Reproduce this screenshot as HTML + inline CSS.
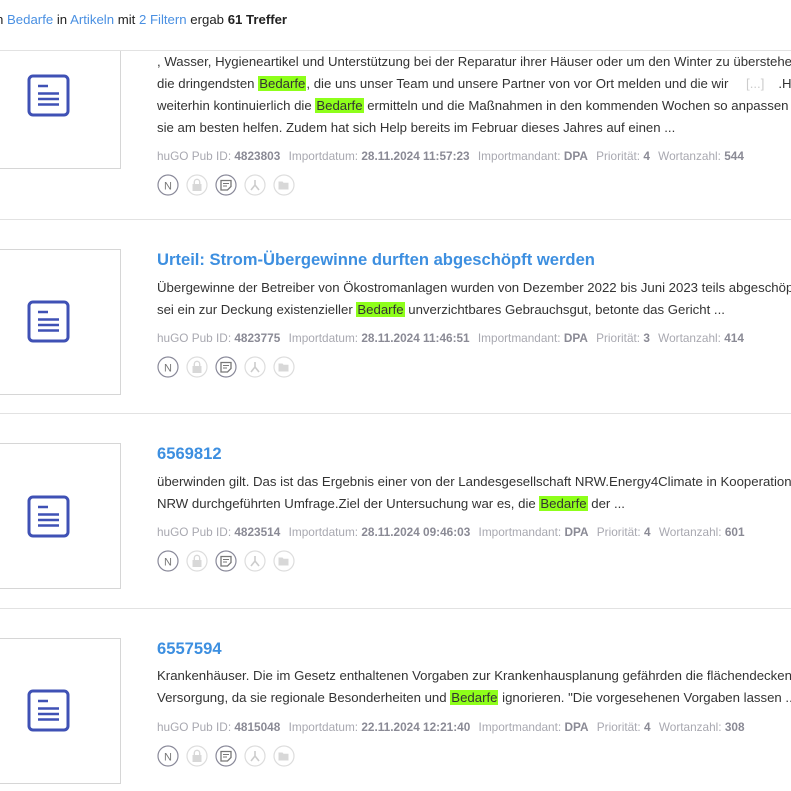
<!DOCTYPE html>
<html><head><meta charset="utf-8"><style>
*{margin:0;padding:0;box-sizing:border-box}
body{width:791px;height:791px;overflow:hidden;background:#fff;font-family:"Liberation Sans",sans-serif;color:#333;position:relative}
.hdr{position:absolute;top:12px;font-size:13.2px;color:#222;white-space:nowrap;left:-4px}
.hdr a{color:#4a90e2}
.sep{position:absolute;left:0;width:791px;height:1px;background:#e2e2e2}
.thumb{position:absolute;left:-10px;width:131px;border:1px solid #d6d6d6;background:#fff}
.doc{position:absolute;left:27px;width:43px;height:43px}
.t{position:absolute;left:157px;font-size:16.6px;font-weight:bold;color:#3d8fe0;white-space:nowrap}
.l{position:absolute;left:157px;font-size:13.2px;white-space:nowrap;color:#333;line-height:16px}
mark{background:#8eff1a;color:#333;padding:0 1px}
.m{position:absolute;left:157px;font-size:11.8px;color:#a8a8b0;white-space:nowrap}
.m b{color:#8a8a95;margin-right:5px}
.ic{position:absolute;left:157px;height:22px}
</style></head><body>
<div class="hdr">n <a>Bedarfe</a> in <a>Artikeln</a> mit <a>2 Filtern</a> ergab <b>61 Treffer</b></div>

<svg width="0" height="0" style="position:absolute">
<defs>
<g id="docic"><rect x="2" y="2" width="39" height="39" rx="4" fill="none" stroke="#3f51b5" stroke-width="3"/><path d="M11 12H21M11 19.5H32M11 25H32M11 30.5H32" stroke="#3f51b5" stroke-width="2.6"/></g>
<g id="icons">
<circle cx="11" cy="11" r="10" fill="none" stroke="#8a8a9a" stroke-width="1.2"/><text x="11" y="15.5" font-size="11" text-anchor="middle" fill="#777" font-family="Liberation Sans">N</text>
<circle cx="40" cy="11" r="10" fill="none" stroke="#ddd" stroke-width="1.2"/><rect x="35.5" y="10" width="9" height="7" fill="#d8d8d8"/><path d="M37.3 10V8a2.7 2.7 0 0 1 5.4 0v2" fill="none" stroke="#d8d8d8" stroke-width="1.4"/>
<circle cx="69" cy="11" r="10" fill="none" stroke="#8a8a9a" stroke-width="1.2"/><path d="M64 6.5h10v6l-3.5 3.5H64z" fill="none" stroke="#777" stroke-width="1.3"/><path d="M66 9.5h6M66 12h4" stroke="#777" stroke-width="1.1"/>
<circle cx="98" cy="11" r="10" fill="none" stroke="#ddd" stroke-width="1.2"/><path d="M98 6v5l-4 5M98 11l4 5" fill="none" stroke="#ccc" stroke-width="1.6"/>
<circle cx="127" cy="11" r="10" fill="none" stroke="#ddd" stroke-width="1.2"/><path d="M121.5 7.5h4l1 1.3h5v6.7h-10z" fill="#d8d8d8"/>
</g></defs></svg>

<!-- row1 -->
<div class="thumb" style="top:50px;height:119px"></div>
<div class="sep" style="top:50px"></div>
<svg class="doc" style="top:74px"><use href="#docic"/></svg>
<div class="l" style="top:54px">, Wasser, Hygieneartikel und Unterstützung bei der Reparatur ihrer Häuser oder um den Winter zu überstehen</div>
<div class="l" style="top:76px">die dringendsten <mark>Bedarfe</mark>, die uns unser Team und unsere Partner von vor Ort melden und die wir <span style="color:#ccc;margin:0 14px 0 14px">[...]</span>.H</div>
<div class="l" style="top:98px">weiterhin kontinuierlich die <mark>Bedarfe</mark> ermitteln und die Maßnahmen in den kommenden Wochen so anpassen</div>
<div class="l" style="top:120px">sie am besten helfen. Zudem hat sich Help bereits im Februar dieses Jahres auf einen ...</div>
<div class="m" style="top:149px">huGO Pub ID: <b>4823803</b> Importdatum: <b>28.11.2024 11:57:23</b> Importmandant: <b>DPA</b> Priorität: <b>4</b> Wortanzahl: <b>544</b></div>
<svg class="ic" style="top:174px" width="140"><use href="#icons"/></svg>
<div class="sep" style="top:219px"></div>

<!-- row2 -->
<div class="thumb" style="top:249px;height:146px"></div>
<svg class="doc" style="top:300px"><use href="#docic"/></svg>
<div class="t" style="top:250px">Urteil: Strom-Übergewinne durften abgeschöpft werden</div>
<div class="l" style="top:280px">Übergewinne der Betreiber von Ökostromanlagen wurden von Dezember 2022 bis Juni 2023 teils abgeschöpft</div>
<div class="l" style="top:302px">sei ein zur Deckung existenzieller <mark>Bedarfe</mark> unverzichtbares Gebrauchsgut, betonte das Gericht ...</div>
<div class="m" style="top:331px">huGO Pub ID: <b>4823775</b> Importdatum: <b>28.11.2024 11:46:51</b> Importmandant: <b>DPA</b> Priorität: <b>3</b> Wortanzahl: <b>414</b></div>
<svg class="ic" style="top:356px" width="140"><use href="#icons"/></svg>
<div class="sep" style="top:413px"></div>

<!-- row3 -->
<div class="thumb" style="top:443px;height:146px"></div>
<svg class="doc" style="top:495px"><use href="#docic"/></svg>
<div class="t" style="top:444px">6569812</div>
<div class="l" style="top:474px">überwinden gilt. Das ist das Ergebnis einer von der Landesgesellschaft NRW.Energy4Climate in Kooperation</div>
<div class="l" style="top:496px">NRW durchgeführten Umfrage.Ziel der Untersuchung war es, die <mark>Bedarfe</mark> der ...</div>
<div class="m" style="top:525px">huGO Pub ID: <b>4823514</b> Importdatum: <b>28.11.2024 09:46:03</b> Importmandant: <b>DPA</b> Priorität: <b>4</b> Wortanzahl: <b>601</b></div>
<svg class="ic" style="top:550px" width="140"><use href="#icons"/></svg>
<div class="sep" style="top:608px"></div>

<!-- row4 -->
<div class="thumb" style="top:638px;height:146px"></div>
<svg class="doc" style="top:689px"><use href="#docic"/></svg>
<div class="t" style="top:639px">6557594</div>
<div class="l" style="top:668px">Krankenhäuser. Die im Gesetz enthaltenen Vorgaben zur Krankenhausplanung gefährden die flächendeckende</div>
<div class="l" style="top:690px">Versorgung, da sie regionale Besonderheiten und <mark>Bedarfe</mark> ignorieren. "Die vorgesehenen Vorgaben lassen ...</div>
<div class="m" style="top:720px">huGO Pub ID: <b>4815048</b> Importdatum: <b>22.11.2024 12:21:40</b> Importmandant: <b>DPA</b> Priorität: <b>4</b> Wortanzahl: <b>308</b></div>
<svg class="ic" style="top:745px" width="140"><use href="#icons"/></svg>
</body></html>
